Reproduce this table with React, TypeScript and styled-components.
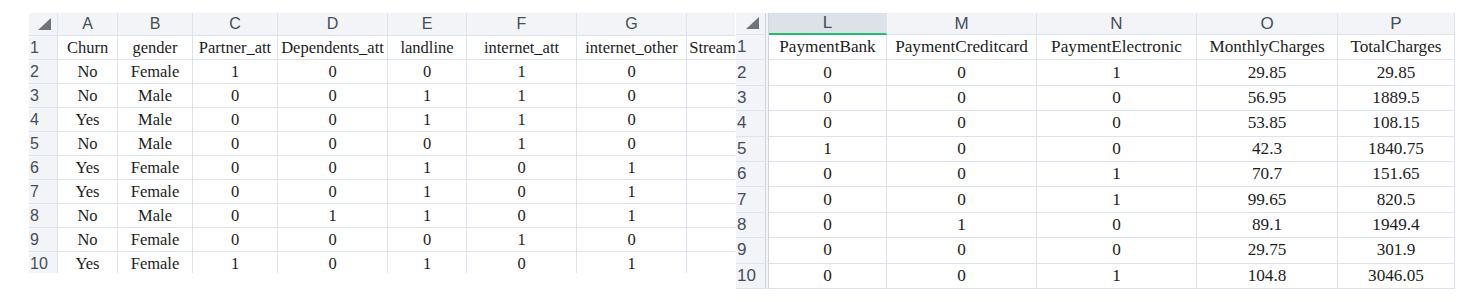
import { Fragment } from 'react'
import styled, { createGlobalStyle } from 'styled-components'

const GlobalStyle = createGlobalStyle`
  html, body {
    margin: 0;
    padding: 0;
    background: #ffffff;
  }
`

const LINE = '#dde3ee'
const HEAD_BG = '#f3f4f7'

type SheetData = {
  letters: string[]
  widths: number[]
  rows: string[][]
}

const leftSheet: SheetData = {
  letters: ['A', 'B', 'C', 'D', 'E', 'F', 'G', 'H'],
  widths: [60, 75, 85, 110, 79, 110, 110, 120],
  rows: [
    ['Churn', 'gender', 'Partner_att', 'Dependents_att', 'landline', 'internet_att', 'internet_other', 'StreamingTV_att'],
    ['No', 'Female', '1', '0', '0', '1', '0', ''],
    ['No', 'Male', '0', '0', '1', '1', '0', ''],
    ['Yes', 'Male', '0', '0', '1', '1', '0', ''],
    ['No', 'Male', '0', '0', '0', '1', '0', ''],
    ['Yes', 'Female', '0', '0', '1', '0', '1', ''],
    ['Yes', 'Female', '0', '0', '1', '0', '1', ''],
    ['No', 'Male', '0', '1', '1', '0', '1', ''],
    ['No', 'Female', '0', '0', '0', '1', '0', ''],
    ['Yes', 'Female', '1', '0', '1', '0', '1', ''],
  ],
}

const rightSheet: SheetData = {
  letters: ['L', 'M', 'N', 'O', 'P'],
  widths: [118, 150, 160, 141, 117],
  rows: [
    ['PaymentBank', 'PaymentCreditcard', 'PaymentElectronic', 'MonthlyCharges', 'TotalCharges'],
    ['0', '0', '1', '29.85', '29.85'],
    ['0', '0', '0', '56.95', '1889.5'],
    ['0', '0', '0', '53.85', '108.15'],
    ['1', '0', '0', '42.3', '1840.75'],
    ['0', '0', '1', '70.7', '151.65'],
    ['0', '0', '1', '99.65', '820.5'],
    ['0', '1', '0', '89.1', '1949.4'],
    ['0', '0', '0', '29.75', '301.9'],
    ['0', '0', '1', '104.8', '3046.05'],
  ],
}

const Page = styled.div`
  display: flex;
  align-items: flex-start;
  gap: 1px;
  padding: 13px 0 0 29px;
`

const Panel = styled.div<{ $w: number; $h: number }>`
  width: ${(p) => p.$w}px;
  height: ${(p) => p.$h}px;
  overflow: hidden;
  background: #fff;
`

const Grid = styled.div<{ $cols: string; $rows: string }>`
  display: grid;
  grid-template-columns: ${(p) => p.$cols};
  grid-template-rows: ${(p) => p.$rows};
  width: max-content;
`

const Corner = styled.div<{ $frozen?: boolean }>`
  position: relative;
  background: ${HEAD_BG};
  border-bottom: 1px solid ${LINE};
  border-right: ${(p) => (p.$frozen ? `4px double #cfd5de` : `1px solid ${LINE}`)};
  &::after {
    content: '';
    position: absolute;
    right: 6px;
    bottom: 5px;
    width: 0;
    height: 0;
    border-left: 13px solid transparent;
    border-bottom: 12px solid #6f747c;
  }
`

const ColHead = styled.div<{ $active?: boolean; $size: number }>`
  display: flex;
  align-items: center;
  justify-content: center;
  background: ${(p) => (p.$active ? '#dde1e8' : HEAD_BG)};
  border-right: 1px solid ${LINE};
  border-bottom: ${(p) => (p.$active ? '2px solid #1fbf6c' : `1px solid ${LINE}`)};
  font-family: 'Liberation Sans', Arial, sans-serif;
  font-size: ${(p) => p.$size}px;
  color: #454d5c;
  overflow: hidden;
  white-space: nowrap;
`

const RowHead = styled.div<{ $frozen?: boolean; $size: number }>`
  display: flex;
  align-items: center;
  padding-left: 1px;
  background: ${HEAD_BG};
  border-bottom: 1px solid ${LINE};
  border-right: ${(p) => (p.$frozen ? `4px double #cfd5de` : `1px solid ${LINE}`)};
  font-family: 'Liberation Sans', Arial, sans-serif;
  font-size: ${(p) => p.$size}px;
  color: #454d5c;
`

const Cell = styled.div<{ $size: number }>`
  display: flex;
  align-items: center;
  justify-content: center;
  border-right: 1px solid ${LINE};
  border-bottom: 1px solid ${LINE};
  font-family: 'Liberation Serif', 'Times New Roman', serif;
  font-size: ${(p) => p.$size}px;
  color: #1c1c1c;
  white-space: nowrap;
`

function Sheet({
  data,
  headH,
  rowH,
  textSize,
  labelSize,
  frozen,
  active,
}: {
  data: SheetData
  headH: number
  rowH: number
  textSize: number
  labelSize: number
  frozen?: boolean
  active?: string
}) {
  const cols = `${frozen ? 33 : 29}px ${data.widths.map((w) => `${w}px`).join(' ')}`
  const rows = `${headH}px repeat(${data.rows.length}, ${rowH}px)`
  return (
    <Grid $cols={cols} $rows={rows}>
      <Corner $frozen={frozen} />
      {data.letters.map((l) => (
        <ColHead key={l} $active={l === active} $size={labelSize}>
          {l}
        </ColHead>
      ))}
      {data.rows.map((row, i) => (
        <Fragment key={i}>
          <RowHead $frozen={frozen} $size={labelSize}>
            {i + 1}
          </RowHead>
          {row.map((v, j) => (
            <Cell key={j} $size={textSize}>
              {v}
            </Cell>
          ))}
        </Fragment>
      ))}
    </Grid>
  )
}

export default function App() {
  return (
    <>
      <GlobalStyle />
      <Page>
        <Panel $w={706} $h={260}>
          <Sheet data={leftSheet} headH={23} rowH={24} textSize={16.5} labelSize={16} />
        </Panel>
        <Panel $w={720} $h={276}>
          <Sheet
            data={rightSheet}
            headH={22}
            rowH={25.4}
            textSize={17.2}
            labelSize={17}
            frozen
            active="L"
          />
        </Panel>
      </Page>
    </>
  )
}
